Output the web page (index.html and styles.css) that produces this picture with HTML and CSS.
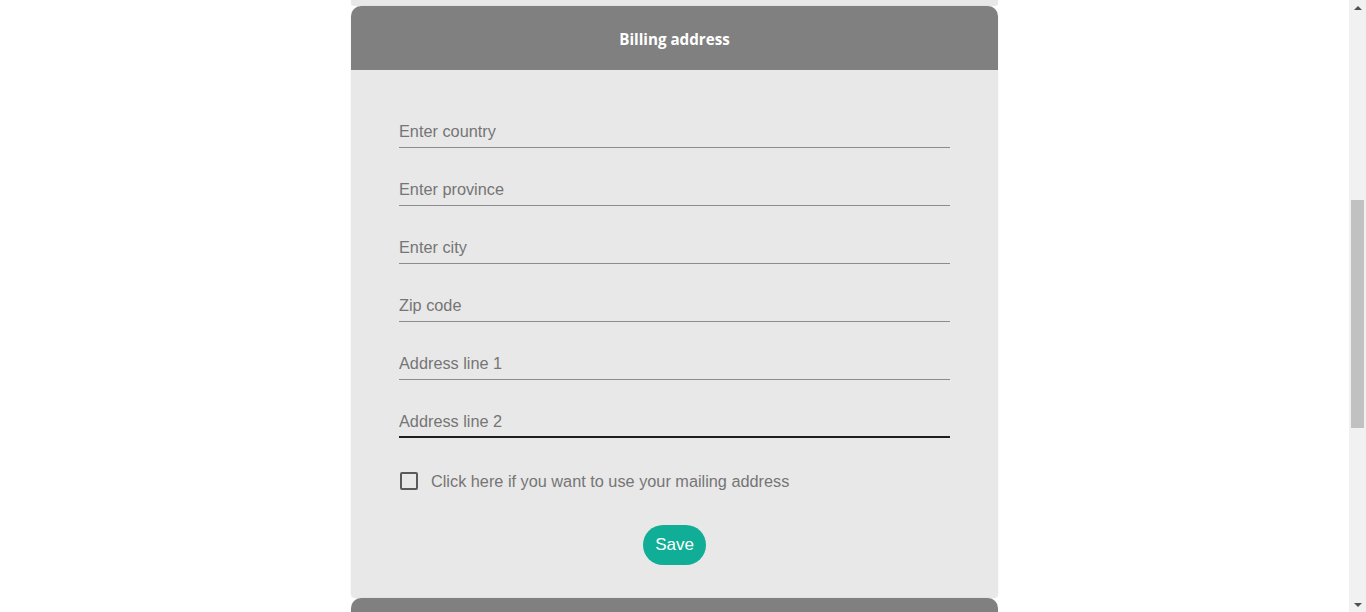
FILE: index.html
```html
<!DOCTYPE html>
<html lang="en">
<head>
<meta charset="utf-8">
<title>Billing address</title>
<link rel="stylesheet" href="styles.css">
</head>
<body>
<div class="viewport">
  <main class="page">
    <div class="prev-card-tail"></div>
    <section class="card">
      <header class="card-header">Billing address</header>
      <form class="card-body">
        <input class="field" type="text" placeholder="Enter country">
        <input class="field" type="text" placeholder="Enter province">
        <input class="field" type="text" placeholder="Enter city">
        <input class="field" type="text" placeholder="Zip code">
        <input class="field" type="text" placeholder="Address line 1">
        <input class="field field-active" type="text" placeholder="Address line 2">
        <label class="check-row">
          <span class="checkbox"></span>
          <span class="check-label">Click here if you want to use your mailing address</span>
        </label>
        <div class="actions">
          <button class="save-btn" type="button">Save</button>
        </div>
      </form>
    </section>
    <section class="card">
      <header class="card-header"></header>
    </section>
  </main>
  <aside class="scrollbar">
    <div class="sb-btn"><span class="arrow-up"></span></div>
    <div class="sb-track"><div class="sb-thumb"></div></div>
    <div class="sb-btn"><span class="arrow-down"></span></div>
  </aside>
</div>
</body>
</html>
```

FILE: styles.css
```css
* { box-sizing: border-box; }

html, body {
  margin: 0;
  padding: 0;
  height: 612px;
  overflow: hidden;
  background: #ffffff;
  font-family: "Liberation Sans", Arial, sans-serif;
}

.viewport {
  display: flex;
  height: 612px;
}

.page {
  flex: 1;
  display: flex;
  flex-direction: column;
  align-items: center;
  overflow: hidden;
}

.prev-card-tail {
  width: 647px;
  height: 6px;
  flex: none;
  background: #e8e8e8;
  border-radius: 0 0 3px 3px;
}

.card {
  width: 647px;
  flex: none;
  display: flex;
  flex-direction: column;
  box-shadow: 0 0 2px rgba(0, 0, 0, 0.08);
  border-radius: 10px 10px 4px 4px;
}

.card-header {
  height: 64px;
  background: #808080;
  border-radius: 10px 10px 0 0;
  display: flex;
  align-items: center;
  justify-content: center;
  padding-top: 2px;
  color: #ffffff;
  font-family: "Open Sans", "Noto Sans", sans-serif;
  font-weight: 700;
  font-size: 15.2px;
}

.card-body {
  background: #e8e8e8;
  padding: 48px 48px 33px;
  display: flex;
  flex-direction: column;
  border-radius: 0 0 4px 4px;
}

.field {
  display: block;
  width: 100%;
  height: 30px;
  margin: 0 0 28px;
  padding: 0 0 2px;
  border: none;
  border-bottom: 1px solid #8c8c8c;
  background: transparent;
  font-family: "Liberation Sans", Arial, sans-serif;
  font-size: 16.3px;
  color: #333;
  outline: none;
}

.field::placeholder {
  color: #757575;
  opacity: 1;
}

.field-active {
  padding-bottom: 1px;
  border-bottom: 2px solid #1e1e1e;
  margin-bottom: 34px;
}

.check-row {
  display: flex;
  align-items: center;
  height: 18px;
  padding-left: 1px;
  cursor: pointer;
}

.checkbox {
  width: 18px;
  height: 18px;
  border: 2px solid #5a5a5a;
  border-radius: 2px;
  flex: none;
}

.check-label {
  margin-left: 13px;
  font-size: 16.3px;
  color: #757575;
}

.actions {
  display: flex;
  justify-content: center;
  margin-top: 35px;
}

.save-btn {
  height: 40px;
  padding: 0 12px;
  border: none;
  border-radius: 20px;
  background: #10ae96;
  color: #ffffff;
  font-family: "Liberation Sans", Arial, sans-serif;
  font-size: 17px;
  cursor: pointer;
}

.scrollbar {
  width: 17px;
  flex: none;
  background: #f1f1f1;
  display: flex;
  flex-direction: column;
}

.sb-btn {
  height: 17px;
  display: flex;
  align-items: center;
  justify-content: center;
}

.arrow-up, .arrow-down {
  width: 0;
  height: 0;
  border-left: 4px solid transparent;
  border-right: 4px solid transparent;
}

.arrow-up { border-bottom: 4px solid #505050; margin-top: -1px; }
.arrow-down { border-top: 4px solid #505050; margin-top: 2px; }

.sb-track {
  flex: 1;
  padding: 183px 2px 0;
}

.sb-thumb {
  height: 228px;
  background: #c1c1c1;
}
```
